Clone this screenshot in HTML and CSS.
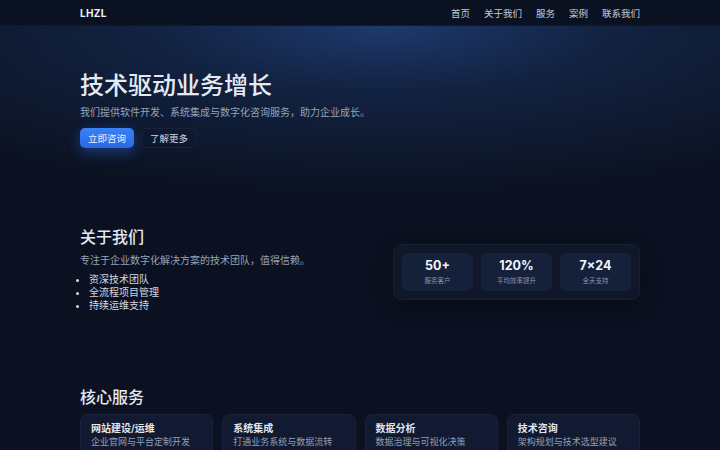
FILE: index.html
```html
<!DOCTYPE html>
<html lang="zh-CN">
<head>
  <meta charset="UTF-8" />
  <meta name="viewport" content="width=device-width, initial-scale=1.0"/>
  <title>LHZL</title>
  <link rel="stylesheet" href="styles.css">
</head>
<body>
  <header class="topbar">
    <div class="container topbar-inner">
      <div class="brand">LHZL</div>
      <nav class="nav">
        <a href="#">首页</a>
        <a href="#">关于我们</a>
        <a href="#">服务</a>
        <a href="#">案例</a>
        <a href="#">联系我们</a>
      </nav>
    </div>
  </header>

  <section class="hero">
    <div class="container">
      <h1>技术驱动业务增长</h1>
      <p class="lead">我们提供软件开发、系统集成与数字化咨询服务，助力企业成长。</p>
      <div class="actions">
        <a href="#" class="btn btn-primary">立即咨询</a>
        <a href="#" class="btn btn-ghost">了解更多</a>
      </div>
    </div>
  </section>

  <section class="about">
    <div class="container about-grid">
      <div class="about-text">
        <h2>关于我们</h2>
        <p>专注于企业数字化解决方案的技术团队，值得信赖。</p>
        <ul>
          <li>资深技术团队</li>
          <li>全流程项目管理</li>
          <li>持续运维支持</li>
        </ul>
      </div>
      <div class="stats">
        <div class="stat">
          <div class="stat-value">50+</div>
          <div class="stat-label">服务客户</div>
        </div>
        <div class="stat">
          <div class="stat-value">120%</div>
          <div class="stat-label">平均效率提升</div>
        </div>
        <div class="stat">
          <div class="stat-value">7×24</div>
          <div class="stat-label">全天支持</div>
        </div>
      </div>
    </div>
  </section>

  <section class="services">
    <div class="container">
      <h2>核心服务</h2>
      <div class="cards">
        <div class="card">
          <h3>网站建设/运维</h3>
          <p>企业官网与平台定制开发</p>
        </div>
        <div class="card">
          <h3>系统集成</h3>
          <p>打通业务系统与数据流转</p>
        </div>
        <div class="card">
          <h3>数据分析</h3>
          <p>数据治理与可视化决策</p>
        </div>
        <div class="card">
          <h3>技术咨询</h3>
          <p>架构规划与技术选型建议</p>
        </div>
      </div>
    </div>
  </section>
</body>
</html>
```

FILE: styles.css
```css
* {
  box-sizing: border-box;
}

body {
  margin: 0;
  background: #0b1120;
  color: #e5eaf3;
  font-family: Inter, "Noto Sans CJK SC", sans-serif;
  font-size: 10px;
}

a {
  color: inherit;
  text-decoration: none;
}

.container {
  width: 560px;
  margin: 0 auto;
}

/* top bar */
.topbar {
  height: 26px;
  background: #0a1120;
  border-bottom: 1px solid #0f1a30;
}

.topbar-inner {
  height: 100%;
  display: flex;
  align-items: center;
  justify-content: space-between;
}

.brand {
  font-size: 10px;
  font-weight: 700;
  letter-spacing: 0.3px;
  color: #f1f4f9;
}

.nav {
  display: flex;
  gap: 14px;
}

.nav a {
  font-size: 9.5px;
  color: #c3cbd8;
}

/* hero */
.hero {
  padding: 46px 0 52px;
  background:
    radial-gradient(ellipse 85% 100% at 53% 0%, rgba(32, 64, 122, 0.85) 0%, rgba(24, 48, 92, 0.55) 38%, rgba(11, 17, 32, 0) 100%);
}

.hero h1 {
  margin: 0 0 4px;
  font-size: 24px;
  font-weight: 500;
  line-height: 1.2;
  color: #e4eaf4;
}

.lead {
  margin: 0;
  font-size: 10px;
  line-height: 1.5;
  color: #97a3b8;
}

.actions {
  display: flex;
  gap: 7px;
  margin-top: 8px;
}

.btn {
  display: inline-flex;
  align-items: center;
  height: 20px;
  padding: 0 8px;
  border-radius: 5px;
  font-size: 9.5px;
}

.btn-primary {
  background: linear-gradient(180deg, #3a80f6, #2b68e4);
  color: #e8f0ff;
  box-shadow: 0 4px 14px rgba(47, 111, 236, 0.45);
}

.btn-ghost {
  border: 1px solid #192338;
  color: #d2d9e4;
}

/* about */
.about {
  padding: 27px 0 0;
}

.about-grid {
  display: grid;
  grid-template-columns: 1fr 247px;
  gap: 24px;
  align-items: center;
}

.about h2,
.services h2 {
  margin: 0;
  font-size: 16px;
  font-weight: 500;
  line-height: 1.3;
  color: #e3e8f1;
}

.about-text p {
  margin: 5px 0 0;
  line-height: 1.5;
  color: #98a3b6;
}

.about-text ul {
  margin: 5px 0 0;
  padding-left: 9px;
}

.about-text li {
  line-height: 13px;
  color: #d3d9e3;
}

.stats {
  display: grid;
  grid-template-columns: repeat(3, 1fr);
  gap: 8px;
  margin-top: 6px;
  padding: 8px;
  background: #0f1729;
  border: 1px solid #151f35;
  border-radius: 8px;
  box-shadow: 0 6px 20px rgba(0, 0, 0, 0.35);
}

.stat {
  height: 38px;
  display: flex;
  flex-direction: column;
  align-items: center;
  justify-content: center;
  background: #15203a;
  border-radius: 6px;
}

.stat-value {
  font-size: 12.5px;
  font-weight: 700;
  line-height: 1.1;
  color: #f2f5fa;
}

.stat-label {
  margin-top: 2px;
  font-size: 6.5px;
  color: #8a96ab;
}

/* services */
.services {
  padding: 75px 0 0;
}

.cards {
  display: grid;
  grid-template-columns: repeat(4, 1fr);
  gap: 9px;
  margin-top: 7px;
}

.card {
  padding: 6px 10px;
  background: #111a30;
  border: 1px solid #18223a;
  border-radius: 7px;
}

.card h3 {
  margin: 0;
  font-size: 10px;
  font-weight: 600;
  line-height: 1.4;
  color: #e1e6ef;
}

.card p {
  margin: 1px 0 0;
  font-size: 9px;
  line-height: 1.4;
  color: #949fb3;
}
```
